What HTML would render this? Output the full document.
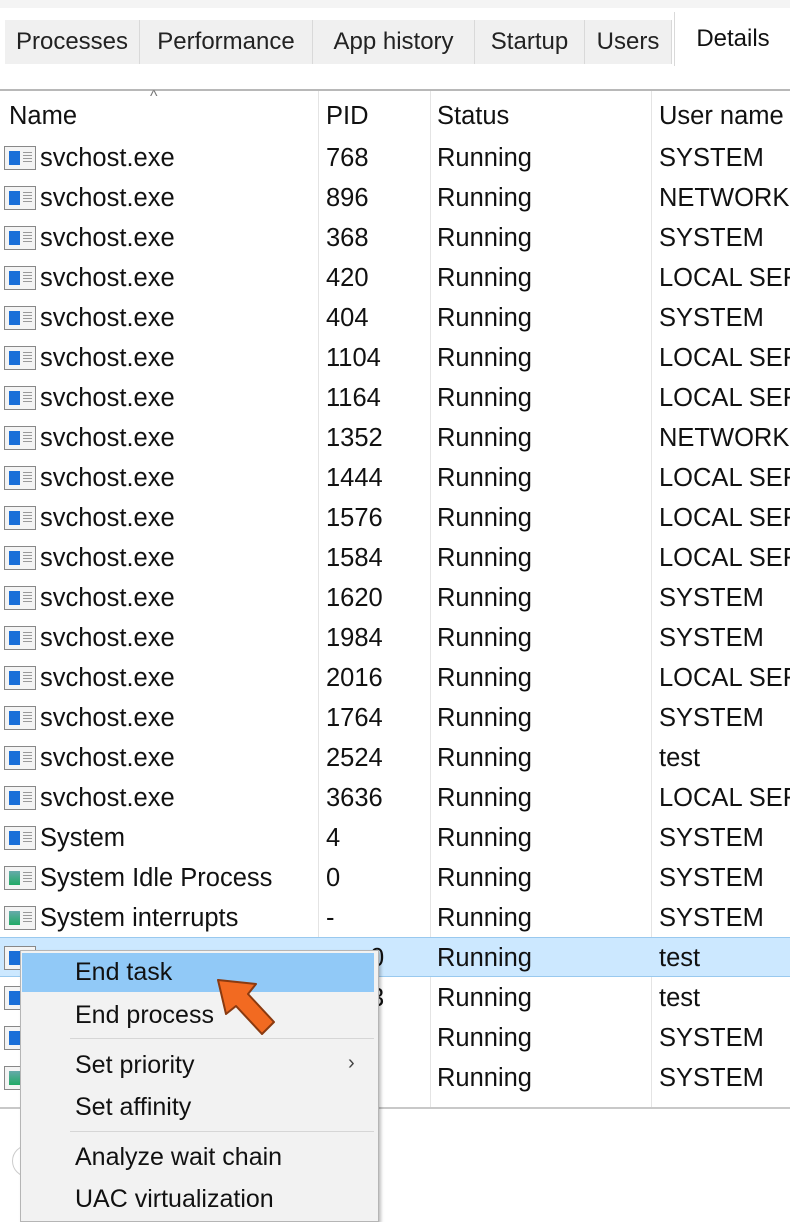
<!DOCTYPE html><html><head><style>
body{margin:0;width:790px;height:1213px;overflow:hidden;background:#fff;font-family:"Liberation Sans",sans-serif;color:#111;position:relative}
.a{position:absolute;white-space:nowrap}
.tab{position:absolute;top:20px;height:44px;background:#f0f0f0;border-right:1px solid #d9d9d9;font-size:24px;line-height:44px;text-align:center;color:#222}
.t{position:absolute;font-size:25.5px;line-height:40px;height:40px;white-space:nowrap}
.ic{position:absolute;left:4px;width:30px;height:22px;border:1px solid #888;background:#f4f4f4}
.ic i{position:absolute;left:4px;top:4px;width:11px;height:14px;background:#1a6fd8}
.ic b{position:absolute;left:18px;top:5px;width:9px;height:12px;background:repeating-linear-gradient(#999 0 1px,transparent 1px 3px)}
.ic.g i{background:linear-gradient(#6aa,#2a6)}
.mi{position:absolute;left:75px;font-size:25px;color:#111}
</style></head><body>
<div class="a" style="left:0;top:0;width:790px;height:8px;background:#f4f4f4"></div>
<div class="tab" style="left:5px;width:134px">Processes</div>
<div class="tab" style="left:140px;width:172px">Performance</div>
<div class="tab" style="left:313px;width:161px">App history</div>
<div class="tab" style="left:475px;width:109px">Startup</div>
<div class="tab" style="left:585px;width:86px">Users</div>
<div class="a" style="left:674px;top:12px;width:116px;height:54px;background:#fff;border-left:1px solid #d9d9d9;font-size:24px;line-height:54px;text-align:center">Details</div>
<div class="a" style="left:0;top:89px;width:790px;height:2px;background:#b8b8b8"></div>
<div class="a" style="left:318px;top:91px;width:1px;height:1017px;background:#e4e4e4"></div>
<div class="a" style="left:430px;top:91px;width:1px;height:1017px;background:#e4e4e4"></div>
<div class="a" style="left:651px;top:91px;width:1px;height:1017px;background:#e4e4e4"></div>
<div class="a" style="left:150px;top:88px;font-size:16px;color:#777">^</div>
<div class="t" style="left:9px;top:96px">Name</div>
<div class="t" style="left:326px;top:96px">PID</div>
<div class="t" style="left:437px;top:96px">Status</div>
<div class="t" style="left:659px;top:96px">User name</div>
<div class="a" style="left:0;top:937px;width:790px;height:38px;background:#cce8ff;border-top:1px solid #99c9ef;border-bottom:1px solid #99c9ef"></div>
<div id="rows"></div>
<div class="a" style="left:0;top:1107px;width:790px;height:2px;background:#c8c8c8"></div>
<div class="a" style="left:12px;top:1145px;width:30px;height:30px;border:1px solid #ccc;border-radius:50%"></div>
<div class="a" style="left:20px;top:950px;width:357px;height:270px;background:#f2f2f2;border:1px solid #b5b5b5;box-shadow:2px 2px 3px rgba(0,0,0,.25)"></div>
<div class="a" style="left:22px;top:953px;width:352px;height:39px;background:#91c9f7"></div>
<div class="a" style="left:70px;top:1038px;width:304px;height:1px;background:#d6d6d6"></div>
<div class="a" style="left:70px;top:1131px;width:304px;height:1px;background:#d6d6d6"></div>
<div class="mi a" style="top:958px">End task</div>
<div class="mi a" style="top:1001px">End process</div>
<div class="mi a" style="top:1051px">Set priority</div>
<div class="mi a" style="top:1093px">Set affinity</div>
<div class="mi a" style="top:1143px">Analyze wait chain</div>
<div class="mi a" style="top:1185px">UAC virtualization</div>
<div class="a" style="left:348px;top:1052px;font-size:20px;color:#444">›</div>
<svg class="a" style="left:210px;top:972px" width="75" height="75" viewBox="0 0 75 75"><path d="M8 8 L46 12 L38 22 L64 50 L52 62 L26 34 L16 42 Z" fill="#f26a21" stroke="#8a3a10" stroke-width="2" stroke-linejoin="round"/></svg>
<script>
var d=[["svchost.exe","768","SYSTEM"],["svchost.exe","896","NETWORK"],["svchost.exe","368","SYSTEM"],["svchost.exe","420","LOCAL SERV"],["svchost.exe","404","SYSTEM"],["svchost.exe","1104","LOCAL SERV"],["svchost.exe","1164","LOCAL SERV"],["svchost.exe","1352","NETWORK"],["svchost.exe","1444","LOCAL SERV"],["svchost.exe","1576","LOCAL SERV"],["svchost.exe","1584","LOCAL SERV"],["svchost.exe","1620","SYSTEM"],["svchost.exe","1984","SYSTEM"],["svchost.exe","2016","LOCAL SERV"],["svchost.exe","1764","SYSTEM"],["svchost.exe","2524","test"],["svchost.exe","3636","LOCAL SERV"],["System","4","SYSTEM"],["System Idle Process","0","SYSTEM",1],["System interrupts","-","SYSTEM",1],["","0","test"],["","3","test"],["","","SYSTEM"],["","","SYSTEM",1]];
var h="";d.forEach(function(r,i){var y=138+i*40;h+='<div class="ic'+(r[3]?' g':'')+'" style="top:'+(y+8)+'px"><i></i><b></b></div><div class="t" style="left:40px;top:'+y+'px">'+r[0]+'</div><div class="t" style="left:'+(i>=20?370:326)+'px;top:'+y+'px">'+r[1]+'</div><div class="t" style="left:437px;top:'+y+'px">Running</div><div class="t" style="left:659px;top:'+y+'px">'+r[2]+'</div>';});
document.getElementById("rows").innerHTML=h;
</script>
</body></html>
